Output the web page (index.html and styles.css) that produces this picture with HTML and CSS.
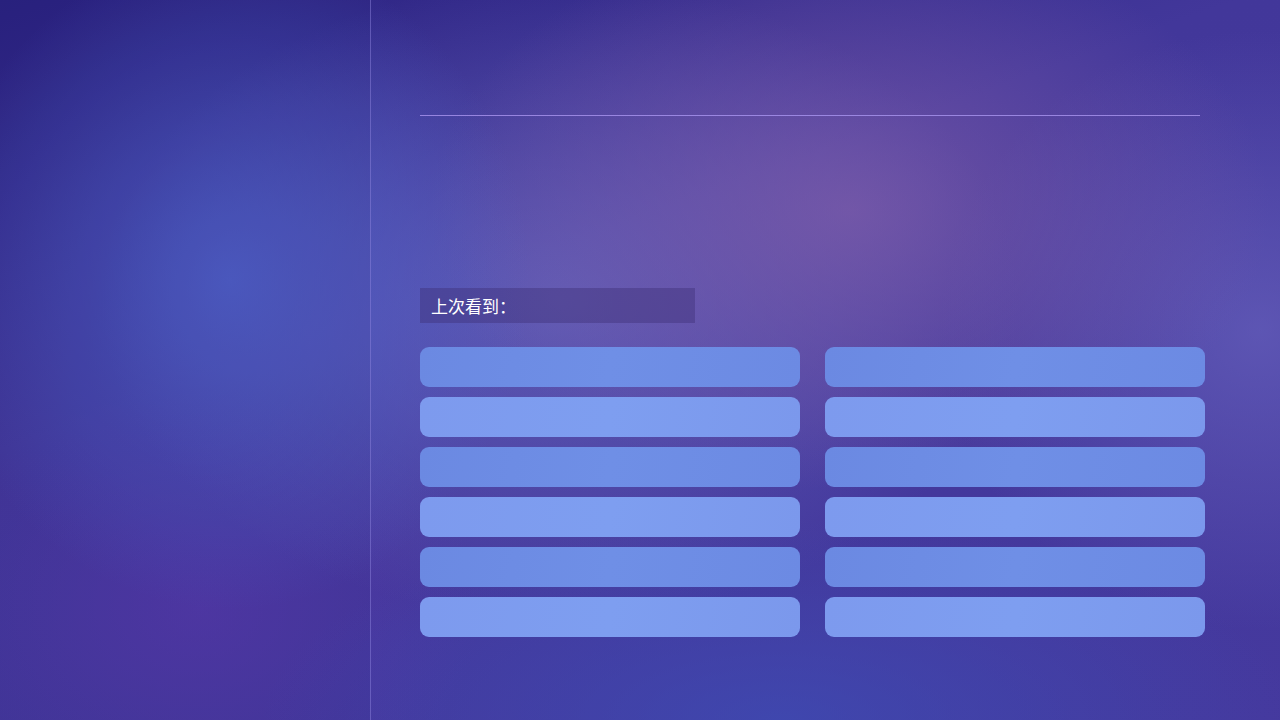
FILE: index.html
```html
<!DOCTYPE html>
<html lang="zh">
<head>
<meta charset="utf-8">
<title>上次看到</title>
<link rel="stylesheet" href="styles.css">
</head>
<body>
<div class="screen">
  <aside class="sidebar"></aside>
  <main class="content">
    <div class="divider"></div>
    <div class="last-seen">上次看到：</div>
    <div class="grid">
      <div class="item odd"></div>
      <div class="item odd"></div>
      <div class="item even"></div>
      <div class="item even"></div>
      <div class="item odd"></div>
      <div class="item odd"></div>
      <div class="item even"></div>
      <div class="item even"></div>
      <div class="item odd"></div>
      <div class="item odd"></div>
      <div class="item even"></div>
      <div class="item even"></div>
    </div>
  </main>
</div>
</body>
</html>
```

FILE: styles.css
```css
html, body {
  margin: 0;
  padding: 0;
}
body {
  width: 1280px;
  height: 720px;
  overflow: hidden;
  font-family: "Noto Sans CJK SC", "Noto Sans", sans-serif;
  background-color: #43399c;
  background-image:
    radial-gradient(ellipse 300px 330px at 230px 280px, rgba(80, 100, 205, 0.8), rgba(80, 100, 205, 0) 100%),
    radial-gradient(ellipse 420px 280px at 850px 210px, rgba(130, 95, 170, 0.7), rgba(130, 95, 170, 0) 100%),
    radial-gradient(ellipse 460px 320px at 560px 300px, rgba(110, 110, 195, 0.65), rgba(110, 110, 195, 0) 100%),
    radial-gradient(ellipse 320px 300px at 1260px 330px, rgba(110, 105, 195, 0.6), rgba(110, 105, 195, 0) 100%),
    radial-gradient(ellipse 520px 200px at 780px 720px, rgba(60, 80, 185, 0.6), rgba(60, 80, 185, 0) 100%),
    radial-gradient(ellipse 280px 220px at 200px 610px, rgba(88, 58, 172, 0.65), rgba(88, 58, 172, 0) 100%),
    linear-gradient(160deg, #2a2280 0%, #42379a 38%, #45399e 100%);
}
.screen {
  display: flex;
  width: 1280px;
  height: 720px;
}
.sidebar {
  box-sizing: border-box;
  width: 371px;
  height: 720px;
  flex: none;
  background: rgba(20, 15, 80, 0.06);
  border-right: 1px solid rgba(150, 140, 230, 0.45);
}
.content {
  flex: 1;
  padding: 115px 0 0 49px;
  display: flex;
  flex-direction: column;
}
.divider {
  width: 780px;
  height: 1px;
  background: rgba(170, 150, 240, 0.8);
}
.last-seen {
  box-sizing: border-box;
  margin-top: 172px;
  width: 275px;
  height: 35px;
  padding-left: 11px;
  display: flex;
  align-items: center;
  background: rgba(60, 45, 115, 0.4);
  color: #ffffff;
  font-size: 17px;
}
.grid {
  margin-top: 24px;
  display: grid;
  grid-template-columns: 380px 380px;
  grid-auto-rows: 40px;
  column-gap: 25px;
  row-gap: 10px;
}
.item {
  border-radius: 9px;
}
.item.odd {
  background: linear-gradient(100deg, #6b89e2, #6f8fe6 50%, #6c8ae3);
}
.item.even {
  background: linear-gradient(100deg, #7d9aee, #7e9ef0 50%, #7b98ec);
}
```
